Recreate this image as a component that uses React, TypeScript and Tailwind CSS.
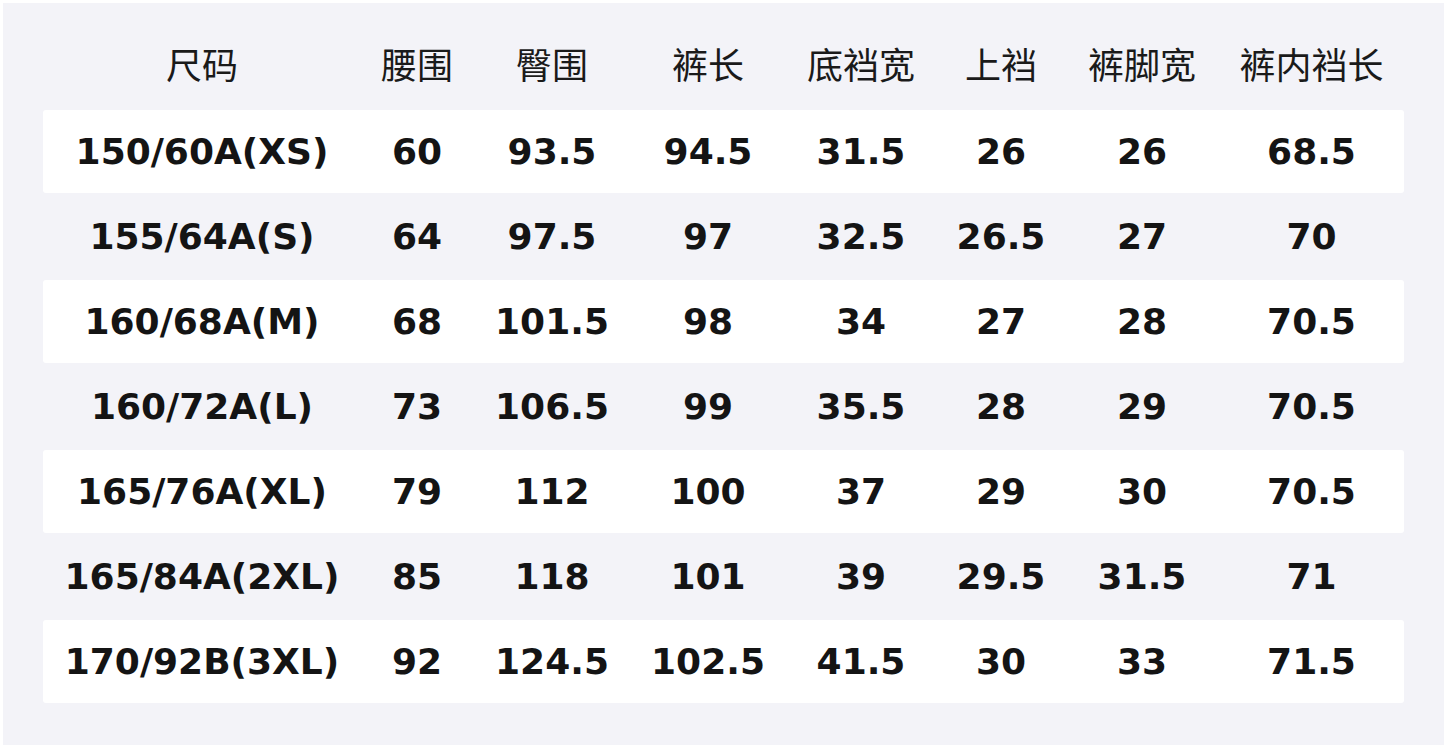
import React from "react";

const headers = ["尺码", "腰围", "臀围", "裤长", "底裆宽", "上裆", "裤脚宽", "裤内裆长"];
const rows = [
  ["150/60A(XS)", "60", "93.5", "94.5", "31.5", "26", "26", "68.5"],
  ["155/64A(S)", "64", "97.5", "97", "32.5", "26.5", "27", "70"],
  ["160/68A(M)", "68", "101.5", "98", "34", "27", "28", "70.5"],
  ["160/72A(L)", "73", "106.5", "99", "35.5", "28", "29", "70.5"],
  ["165/76A(XL)", "79", "112", "100", "37", "29", "30", "70.5"],
  ["165/84A(2XL)", "85", "118", "101", "39", "29.5", "31.5", "71"],
  ["170/92B(3XL)", "92", "124.5", "102.5", "41.5", "30", "33", "71.5"],
];

const cols = "grid grid-cols-[318px_112px_158px_154px_152px_128px_154px_185px]";

export default function App() {
  return (
    <div className="w-[1447px] h-[748px] bg-white p-[3px]">
      <div className="w-[1441px] h-[742px] bg-[#f3f3f8] pt-[21px] pl-[40px]">
        <div className="w-[1361px]">
          <div
            className={`${cols} h-[85px] pb-[8px] items-center text-[36px] text-[#1a1a1a]`}
            style={{ fontFamily: '"Noto Sans CJK SC", "Noto Sans", sans-serif' }}
          >
            {headers.map((h) => (
              <div key={h} className="text-center leading-none">
                {h}
              </div>
            ))}
          </div>
          {rows.map((r, i) => (
            <div key={i} className="h-[85px] py-px">
              <div
                className={`${cols} h-full items-center rounded-[3px] ${
                  i % 2 === 0 ? "bg-white" : "bg-transparent"
                } text-[36px] font-bold text-[#141414]`}
                style={{ fontFamily: '"DejaVu Sans", sans-serif' }}
              >
                {r.map((c, j) => (
                  <div key={j} className="text-center leading-none">
                    {c}
                  </div>
                ))}
              </div>
            </div>
          ))}
        </div>
      </div>
    </div>
  );
}
